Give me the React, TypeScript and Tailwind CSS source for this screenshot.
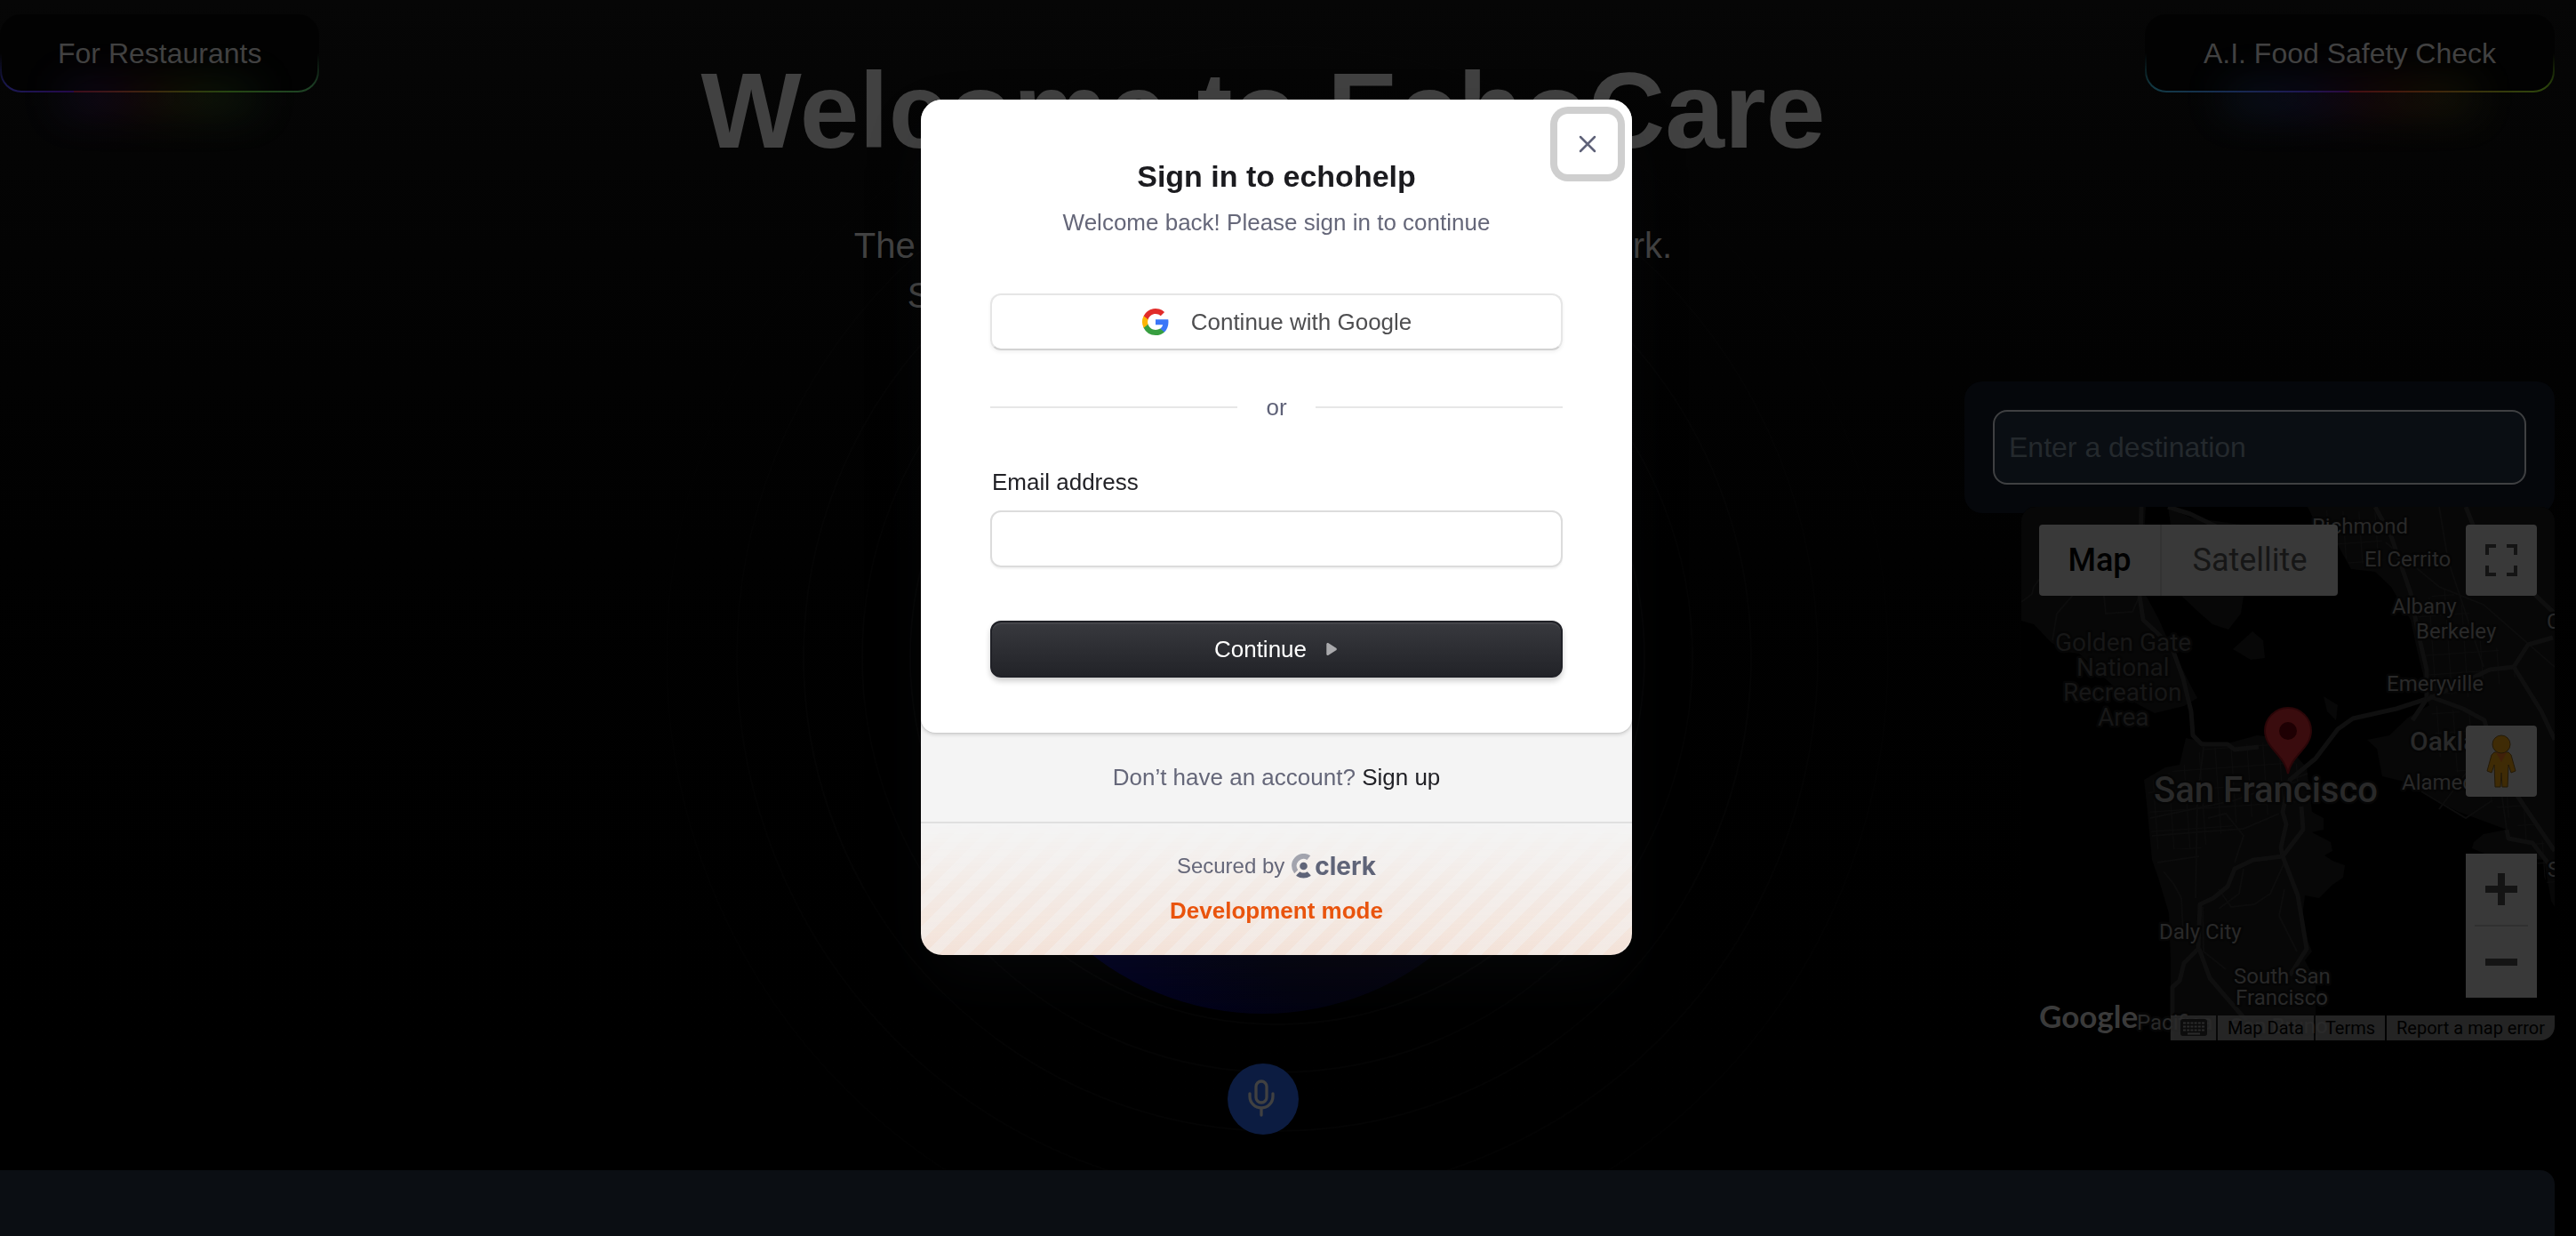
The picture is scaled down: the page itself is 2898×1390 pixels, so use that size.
import { useState } from "react";

const LAND = "#070707";
const ROAD = "#0f0f0f";

const mapLabels = [
  { text: "Richmond", x: 327, y: 30, size: 24, fill: "#292929" },
  { text: "El Cerrito", x: 386, y: 67, size: 24, fill: "#292929" },
  { text: "Albany", x: 417, y: 120, size: 24, fill: "#292929" },
  { text: "Berkeley", x: 444, y: 148, size: 24, fill: "#292929" },
  { text: "Emeryville", x: 411, y: 207, size: 24, fill: "#292929" },
  { text: "C", x: 591, y: 137, size: 24, fill: "#292929" },
  { text: "Golden Gate", x: 38, y: 162, size: 28, fill: "#171717" },
  { text: "National", x: 62, y: 190, size: 28, fill: "#171717" },
  { text: "Recreation", x: 47, y: 218, size: 28, fill: "#171717" },
  { text: "Area", x: 86, y: 246, size: 28, fill: "#171717" },
  { text: "Oakland", x: 437, y: 274, size: 30, fill: "#292929", weight: 500 },
  { text: "Alameda", x: 428, y: 318, size: 24, fill: "#292929" },
  { text: "San Francisco", x: 149, y: 332, size: 40, fill: "#292929", weight: 500 },
  { text: "Daly City", x: 155, y: 486, size: 24, fill: "#292929" },
  { text: "South San", x: 239, y: 536, size: 24, fill: "#292929" },
  { text: "Francisco", x: 241, y: 560, size: 24, fill: "#292929" },
  { text: "Pacifica", x: 130, y: 588, size: 24, fill: "#292929" },
  { text: "San Bruno", x: 235, y: 592, size: 24, fill: "#292929" },
  { text: "S", x: 592, y: 416, size: 24, fill: "#292929" },
];

const landShapes = [
  "0,0 140,0 135,90 155,127 165,150 180,180 190,200 198,215 183,224 150,232 118,215 88,187 65,165 50,163 33,152 14,132 0,128",
  "165,0 190,12 262,22 300,60 250,100 247,120 233,138 215,132 198,117 180,100",
  "260,140 238,160 258,172 274,170 272,150",
  "322,0 330,16 356,43 371,70 398,73 416,90 438,127 445,160 454,197 456,217 459,223 435,237 414,257 389,262 400,272 406,303 435,310 472,333 492,343 546,363 520,368 509,377 507,384 521,390 588,397 596,443 600,450 600,0",
  "185,260 225,268 265,257 290,260 321,293 323,310 327,343 340,350 340,363 327,366 348,377 350,387 341,392 350,398 364,403 362,417 350,425 335,440 319,437 315,470 327,500 319,510 331,533 331,577 335,600 168,600 168,510 166,457 154,417 147,397 141,333 138,307 162,293 178,290",
  "340,213 356,223 354,240 344,230",
];

const highways = [
  "135,0 133,100 137,127 169,157 182,193 191,230 193,257 203,267 232,267 240,273 267,270",
  "165,0 190,8 236,30",
  "456,216 422,227 373,238 356,250 331,283 302,307 294,343 298,357 292,383 294,393 261,397 240,407 232,427 216,440 201,447 199,497 183,513 178,533 170,540 170,600",
  "315,337 317,363 294,393 311,437 321,497 302,527",
  "398,0 416,33 438,97 446,140 456,183 456,216 440,240",
  "459,213 497,227 521,240 535,290 568,340 600,387",
  "456,217 527,183 554,180 570,155 598,147",
  "554,180 585,230 600,262",
  "500,0 516,40 600,120",
  "200,497 212,530 249,573 270,600",
  "546,363 548,373 575,378 600,410",
];

const streets = [
  "0,107 12,98 14,90 36,60",
  "35,150 40,120 66,90 90,70 95,120 125,118 133,100",
  "205,270 198,330 196,440",
  "145,350 240,330 322,300",
  "147,370 196,366 250,362 290,345",
  "210,350 230,345 250,370 240,400",
  "222,430 236,450 262,447 280,435 296,400",
  "250,407 245,435 222,452",
  "153,400 180,396 200,393",
  "160,410 172,425 180,440 182,480",
  "296,430 290,460 300,480 310,500",
  "204,450 205,500 230,520",
  "410,40 470,90 520,110 600,180",
  "470,0 480,60 500,120 520,180",
  "470,340 500,300 540,320 546,363",
  "450,320 500,350 530,330",
];

function CityMap() {
  return (
    <svg viewBox="0 0 600 600" className="block w-full" role="img" aria-label="Map of San Francisco">
      <defs>
        <pattern id="blocks" width="18" height="22" patternUnits="userSpaceOnUse" patternTransform="rotate(-4)">
          <path d="M0 0H18M0 0V22" stroke="#0c0c0c" strokeWidth="2" fill="none" />
        </pattern>
      </defs>
      <rect width="600" height="600" fill="#000" />
      {landShapes.map((points) => (
        <polygon key={points} points={points} fill={LAND} />
      ))}
      <polygon points="142,310 180,293 205,272 285,264 320,300 322,330 290,345 250,350 200,385 148,385" fill="url(#blocks)" />
      <polygon points="335,4 400,6 410,60 370,66" fill="url(#blocks)" />
      <polygon points="445,110 480,90 560,190 500,215 458,205" fill="url(#blocks)" />
      <polygon points="460,222 510,235 600,400 600,440 560,360 470,280" fill="url(#blocks)" />
      {streets.map((points) => (
        <polyline key={points} points={points} fill="none" stroke="#0c0c0c" strokeWidth="2" />
      ))}
      {highways.map((points) => (
        <polyline key={points} points={points} fill="none" stroke={ROAD} strokeWidth="5" strokeLinejoin="round" />
      ))}
      {mapLabels.map((label) => (
        <text
          key={label.text}
          x={label.x}
          y={label.y}
          fontSize={label.size}
          fontWeight={label.weight ?? 400}
          fill={label.fill}
          stroke="#050505"
          strokeWidth="5"
          strokeLinejoin="round"
          paintOrder="stroke"
        >
          {label.text}
        </text>
      ))}
      <path
        d="M300 300c-2-10-7-16-13-23-7-8-13-15-13-25a26 26 0 0 1 52 0c0 10-6 17-13 25-6 7-11 13-13 23z"
        fill="#3a0c0e"
        stroke="#2a0608"
        strokeWidth="2"
      />
      <circle cx="300" cy="252" r="10" fill="#1e0003" />
    </svg>
  );
}

function MapPanel() {
  return (
    <div className="relative -mt-[7px] w-[600px] overflow-hidden rounded-2xl font-[Roboto,sans-serif]">
      <CityMap />
      <div className="absolute top-5 left-5 flex h-20 overflow-hidden rounded-[4px] bg-[#393939] text-[36px]">
        <button className="w-[138px] border-r-2 border-[#333] font-medium text-black">Map</button>
        <button className="w-[198px] text-[#161616]">Satellite</button>
      </div>
      <button
        aria-label="Toggle fullscreen view"
        className="absolute top-5 right-5 flex size-20 items-center justify-center rounded-[4px] bg-[#393939]"
      >
        <svg viewBox="0 0 18 18" className="size-9" fill="#141414">
          <path d="M0 0v6h2V2h4V0H0zm16 0h-4v2h4v4h2V0h-2zm0 16h-4v2h6v-6h-2v4zM2 12H0v6h6v-2H2v-4z" />
        </svg>
      </button>
      <button
        aria-label="Drag Pegman onto the map to open Street View"
        className="absolute top-[246px] right-5 flex size-20 items-center justify-center rounded-[4px] bg-[#393939]"
      >
        <svg viewBox="0 0 34 60" className="h-15" stroke="#241a08" strokeWidth="1">
          <path d="M9 20h16l3 3 5 18-5 2-3-9-1 25h-6l-1-16-1 16H10L9 34l-3 9-5-2 5-18z" fill="#3f2b05" />
          <path d="M11 20h12l-6 11z" fill="#41200a" stroke="none" />
          <circle cx="17" cy="11" r="10" fill="#3f2b05" />
        </svg>
      </button>
      <div className="absolute top-[390px] right-5 flex w-20 flex-col items-center bg-[#393939]">
        <button aria-label="Zoom in" className="flex h-20 w-full items-center justify-center">
          <svg viewBox="0 0 18 18" className="size-9" fill="#141414">
            <path d="M7 0h4v7h7v4h-7v7H7v-7H0V7h7z" />
          </svg>
        </button>
        <div className="h-[2px] w-15 bg-[#303030]" />
        <button aria-label="Zoom out" className="flex h-20 w-full items-center justify-center">
          <svg viewBox="0 0 18 18" className="size-9" fill="#141414">
            <path d="M0 7h18v4H0z" />
          </svg>
        </button>
      </div>
      <a
        href="#google"
        className="absolute bottom-[10px] left-5 font-[Lato,sans-serif] text-[35px] leading-9 font-bold text-[#3a3a3a]"
      >
        Google
      </a>
      <div className="absolute right-0 bottom-0 flex h-7 gap-[2px] text-[20px] leading-7 text-black">
        <button aria-label="Keyboard shortcuts" className="flex w-[51px] items-center justify-center bg-[#2a2a2a]/85">
          <svg viewBox="0 0 30 20" className="h-5">
            <rect width="30" height="19" rx="3" fill="#0c0c0c" />
            <path d="M3 4.500h24M3 8.500h24M3 12.500h24" stroke="#2a2a2a" strokeWidth="2" strokeDasharray="3 1.200" />
            <path d="M8 16.500h14" stroke="#2a2a2a" strokeWidth="2" />
          </svg>
        </button>
        <button className="w-[108px] bg-[#2a2a2a]/85">Map Data</button>
        <a href="#terms" className="w-[78px] bg-[#2a2a2a]/85 text-center">
          Terms
        </a>
        <a href="#report" className="w-[189px] bg-[#2a2a2a]/85 text-center">
          Report a map error
        </a>
      </div>
    </div>
  );
}

function Backdrop() {
  return (
    <svg
      viewBox="-720 -720 1440 1440"
      className="absolute top-[19px] left-[717px] size-[1440px]"
      fill="none"
      stroke="#ffffff"
      strokeWidth="2"
      aria-hidden="true"
    >
      <circle r="413" strokeOpacity="0.018" />
      <circle r="467" strokeOpacity="0.016" />
      <circle r="533" strokeOpacity="0.014" />
      <circle r="608" strokeOpacity="0.012" />
      <circle r="687" strokeOpacity="0.008" />
    </svg>
  );
}

function Page() {
  const [destination, setDestination] = useState("");

  return (
    <main className="relative flex min-h-screen flex-col overflow-hidden bg-linear-to-b from-[#060606] to-black pr-6 text-[#414141]">
      <Backdrop />
      <div className="relative grid grid-cols-[1fr_auto_1fr]">
        <div className="pt-4">
          <button className="relative h-22 rounded-3xl border-2 border-transparent px-[63px] text-[32px] [background:linear-gradient(#020202,#020202)_padding-box,linear-gradient(#020202_50%,transparent_95%)_border-box,linear-gradient(90deg,#1b1b55,#24084a_23%,#420c14_23%,#42200f_40%,#34360c_58%,#264812_72%,#1d4228)_border-box]">
            <span className="absolute -bottom-4 left-1/5 h-4 w-3/5 bg-[linear-gradient(90deg,#20205c,#34083a_25%,#42180c_42%,#34400c_65%,#163c1c)] opacity-75 blur-[24px]" />
            <span className="relative">For Restaurants</span>
          </button>
        </div>

        <div className="flex flex-col items-center pt-16 pr-8">
          <h1 className="text-[120px] leading-none font-bold">Welcome to EchoCare</h1>
          <p className="mt-16 text-center text-[40px] leading-14 text-[#424242]">
            The only voice-led A.I. assistant in emergency work.
            <br />
            Speak naturally and get all the help you need
          </p>
          <div className="mt-[156px] size-[624px] rounded-full bg-[radial-gradient(circle_at_66%_80%,#06030a_0%,#030310_18%,#02021e_38%,#02023a_75%)]" />
          <button aria-label="Start talking" className="mt-14 flex size-20 items-center justify-center rounded-full bg-[#0c1c41]">
            <svg viewBox="0 0 34 44" className="h-11" fill="none" stroke="#414141" strokeWidth="3.300" strokeLinecap="round">
              <rect x="9" y="2" width="12" height="24" rx="6" />
              <path d="M2 16v3a13 13 0 0 0 26 0v-3M15 33v7" />
            </svg>
          </button>
        </div>

        <div className="flex flex-col items-end pt-4">
          <button className="relative h-22 rounded-3xl border-2 border-transparent px-16 text-[32px] [background:linear-gradient(#020202,#020202)_padding-box,linear-gradient(#020202_50%,transparent_95%)_border-box,linear-gradient(90deg,#123c44,#182a52_22%,#1f1852_38%,#2a0842_50%,#480e10_50%,#42200c_68%,#38340c_82%,#2c480c)_border-box]">
            <span className="absolute -bottom-4 left-1/5 h-4 w-3/5 bg-[linear-gradient(90deg,#12304c,#1c1858_35%,#3c0c2a_50%,#48180c_65%,#38400c)] opacity-75 blur-[24px]" />
            <span className="relative">A.I. Food Safety Check</span>
          </button>
          <div className="mt-[325px] w-[664px] rounded-[20px] bg-[#05070b] p-8">
            <input
              type="text"
              aria-label="Destination"
              placeholder="Enter a destination"
              value={destination}
              onChange={(e) => setDestination(e.target.value)}
              className="block h-[84px] w-full rounded-2xl border-2 border-[#3f4042] bg-[#0a0e13] px-4 text-[32px] placeholder:text-[#24292d]"
            />
          </div>
          <MapPanel />
        </div>
      </div>
      <div className="relative mt-10 grow rounded-tr-2xl bg-[#0b0e13]" />
    </main>
  );
}

function GoogleIcon() {
  return (
    <svg viewBox="0 0 16 16" className="size-8" fill="none">
      <path
        fill="#3a76f8"
        d="M15.240 8.170c0-.52-.05-1.020-.13-1.500H8v2.940h4.070c-.18.930-.71 1.720-1.510 2.250v1.910H13c1.430-1.320 2.240-3.260 2.240-5.600z"
      />
      <path fill="#379e40" d="M8 15.500c2.030 0 3.730-.67 4.980-1.810l-2.420-1.890c-.67.450-1.530.72-2.560.72-1.960 0-3.620-1.320-4.210-3.100H1.310v1.940A7.500 7.500 0 0 0 8 15.500z" />
      <path fill="#fcb503" d="M3.790 9.420a4.500 4.500 0 0 1 0-2.850V4.630H1.310a7.500 7.500 0 0 0 0 6.730l2.480-1.940z" />
      <path fill="#e12c2a" d="M8 3.480c1.110 0 2.100.38 2.880 1.130l2.150-2.150A7.500 7.500 0 0 0 1.310 4.630l2.480 1.940C4.380 4.800 6.040 3.480 8 3.480z" />
    </svg>
  );
}

function ClerkLogo() {
  return (
    <a href="#clerk" aria-label="Clerk" className="flex items-center gap-1 text-[#5f6478]">
      <svg viewBox="0 0 22 28" className="h-7" fill="currentColor">
        <path d="M21.200 2.200A13.600 13.600 0 0 0 3.200 22.200l4-4a7.800 7.800 0 0 1 10.200-11.300z" opacity="0.550" />
        <circle cx="13.500" cy="14" r="4.300" />
        <path d="M21.200 25.200a13.600 13.600 0 0 1-15.500 0c-.5-.4-.5-.9-.1-1.300l3-3c.4-.4.9-.4 1.400-.2a8 8 0 0 0 7 0c.5-.2 1-.2 1.400.2l2.900 3c.4.400.4.900-.1 1.300z" />
      </svg>
      <span className="font-[Inter,sans-serif] text-[28px] leading-7 font-bold">clerk</span>
    </a>
  );
}

function SignInDialog({ onClose }: { onClose: () => void }) {
  const [email, setEmail] = useState("");

  return (
    <div className="fixed inset-0 flex items-start justify-center pt-28 pr-[26px] text-[26px] leading-9">
      <div
        role="dialog"
        aria-modal="true"
        aria-labelledby="sign-in-title"
        className="w-[800px] overflow-hidden rounded-3xl bg-[#f4f4f4] shadow-[0_30px_70px_-10px_rgba(25,28,33,0.25)]"
      >
        <div className="relative rounded-b-2xl bg-white px-[78px] pt-[62px] pb-[62px] shadow-[0_0_2px_rgba(0,0,0,0.16),0_2px_4px_rgba(0,0,0,0.16)]">
          <button
            onClick={onClose}
            aria-label="Close modal"
            className="absolute top-4 right-4 flex size-17 items-center justify-center rounded-xl text-[#5f6278] ring-8 ring-[#cfcfcf]"
          >
            <svg viewBox="0 0 20 20" className="size-5" fill="none" stroke="currentColor" strokeWidth="2.500" strokeLinecap="round">
              <path d="M2 2l16 16M18 2L2 18" />
            </svg>
          </button>

          <div className="text-center">
            <h2 id="sign-in-title" className="text-[34px] leading-12 font-bold text-[#1b1b1f]">
              Sign in to echohelp
            </h2>
            <p className="mt-[10px] text-[#656779]">Welcome back! Please sign in to continue</p>
          </div>

          <button className="mt-[62px] flex h-16 w-full items-center justify-center gap-6 rounded-xl border-2 border-[#e6e6e6] border-b-[#d2d2d2] text-[#4e4e50] shadow-[0_2px_4px_rgba(0,0,0,0.06)]">
            <GoogleIcon />
            Continue with Google
          </button>

          <div className="mt-[46px] flex items-center gap-8 text-[#5f6278]">
            <div className="h-[2px] flex-1 bg-[#e7e7e7]" />
            or
            <div className="h-[2px] flex-1 bg-[#e7e7e7]" />
          </div>

          <form onSubmit={(e) => e.preventDefault()}>
            <label htmlFor="email" className="mt-12 block pl-[2px] text-[#212126]">
              Email address
            </label>
            <input
              id="email"
              type="email"
              value={email}
              onChange={(e) => setEmail(e.target.value)}
              className="mt-[14px] block h-16 w-full rounded-xl border-2 border-[#dcdcdc] px-6 shadow-[0_2px_2px_rgba(0,0,0,0.05)]"
            />
            <button
              type="submit"
              className="mt-[60px] flex h-16 w-full items-center justify-center gap-5 rounded-xl border-2 border-[#202127] bg-linear-to-b from-[#38393e] to-[#222328] text-white shadow-[0_4px_6px_rgba(0,0,0,0.2),inset_0_2px_1px_rgba(255,255,255,0.07)]"
            >
              Continue
              <svg viewBox="0 0 14 14" className="size-4" fill="#a9a9ac">
                <path d="M2 2.200C2 1 3 .5 4 1.200l7.500 4.600c.8.500.8 1.900 0 2.400L4 12.800c-1 .7-2 .2-2-1z" />
              </svg>
            </button>
          </form>
        </div>

        <p className="py-8 text-center text-[#656779]">
          Don’t have an account?{" "}
          <a href="#sign-up" className="text-[#212126]">
            Sign up
          </a>
        </p>

        <div className="relative border-t-2 border-[#e0e0e0] pt-[34px] pb-8 text-center">
          <div className="absolute inset-0 bg-[repeating-linear-gradient(-45deg,#f3691612,#f3691612_12px,#f3691620_12px,#f3691620_24px)] [mask-image:linear-gradient(to_top,black,transparent)]" />
          <div className="relative flex items-center justify-center gap-2 text-[24px] leading-7 text-[#656779]">
            Secured by
            <ClerkLogo />
          </div>
          <p className="relative mt-[18px] font-bold text-[#e9540d]">Development mode</p>
        </div>
      </div>
    </div>
  );
}

export default function App() {
  const [open, setOpen] = useState(true);

  return (
    <div className="font-['Liberation_Sans',Arial,sans-serif]">
      <Page />
      {open && <SignInDialog onClose={() => setOpen(false)} />}
    </div>
  );
}
